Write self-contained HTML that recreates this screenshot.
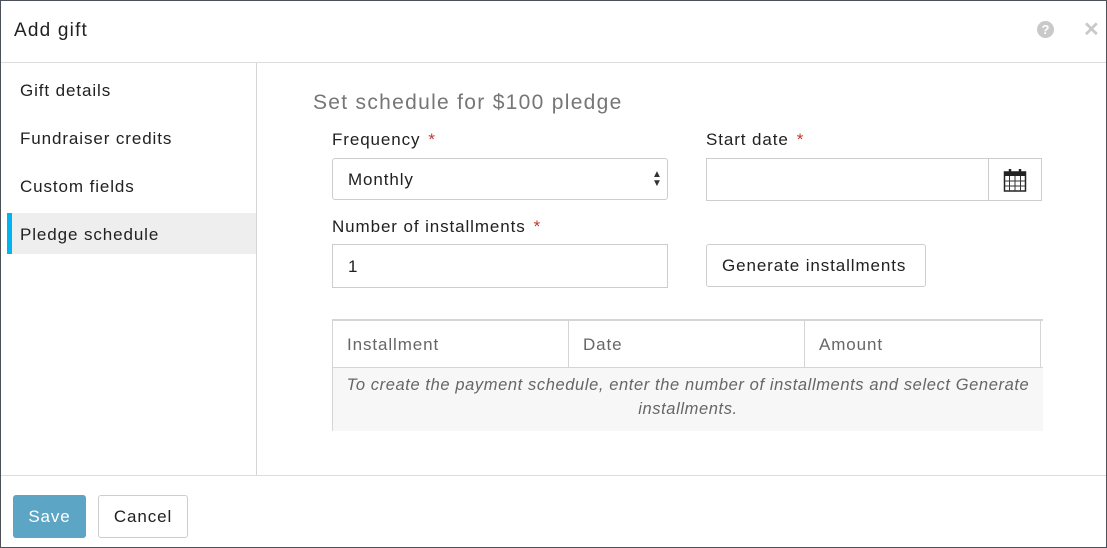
<!DOCTYPE html>
<html><head><style>
*{box-sizing:border-box;margin:0;padding:0}
body{width:1107px;height:548px;font-family:"Liberation Sans",sans-serif;color:#212121;background:#fff;position:relative;overflow:hidden}
.frame{position:absolute;left:0;top:0;width:1107px;height:548px;border:1px solid #4b5157}
.a{position:absolute}
.t{font-size:17px;letter-spacing:0.9px}
.req{color:#c0392b;margin-left:8px}
.box{border:1px solid #cdcdcd;background:#fff}
</style></head><body>
<div class="frame"></div>
<div class="a" style="left:14px;top:20px;font-size:19px;letter-spacing:1.2px;color:#212121">Add gift</div>
<div class="a" style="left:1037px;top:21px;width:17px;height:17px;border-radius:50%;background:#c9c9c9;color:#fff;font-size:13px;font-weight:bold;text-align:center;line-height:17px">?</div>
<div class="a" style="left:1083px;top:17px;color:#c9c9c9;font-size:20px;font-weight:bold">✕</div>
<div class="a" style="left:1px;top:62px;width:1105px;height:1px;background:#ddd"></div>
<div class="a" style="left:256px;top:63px;width:1px;height:412px;background:#d5d5d5"></div>
<div class="a" style="left:1px;top:475px;width:1105px;height:1px;background:#ddd"></div>
<div class="a t" style="left:20px;top:81px">Gift details</div>
<div class="a t" style="left:20px;top:129px">Fundraiser credits</div>
<div class="a t" style="left:20px;top:177px">Custom fields</div>
<div class="a" style="left:7px;top:213px;width:249px;height:41px;background:#eee;border-left:5px solid #00b4f1"></div>
<div class="a t" style="left:20px;top:225px">Pledge schedule</div>
<div class="a" style="left:313px;top:91px;font-size:21px;letter-spacing:1.3px;color:#767676">Set schedule for $100 pledge</div>
<div class="a t" style="left:332px;top:130px">Frequency<span class="req">*</span></div>
<div class="a t" style="left:706px;top:130px">Start date<span class="req">*</span></div>
<div class="a box" style="left:332px;top:158px;width:336px;height:42px;border-radius:3px"></div>
<div class="a t" style="left:348px;top:170px">Monthly</div>
<div class="a" style="left:652px;top:170px;font-size:10px;line-height:9px;color:#333">▲<br>▼</div>
<div class="a box" style="left:706px;top:158px;width:336px;height:43px"></div>
<div class="a" style="left:988px;top:158px;width:1px;height:43px;background:#cdcdcd"></div>
<svg class="a" style="left:1003px;top:168px" width="24" height="24" viewBox="0 0 24 24"><rect x="1.5" y="4" width="21" height="19" fill="#fff" stroke="#222" stroke-width="1.5"/><rect x="1.5" y="4" width="21" height="4" fill="#222"/><path d="M7 1v5M17 1v5" stroke="#222" stroke-width="2.5"/><path d="M6.5 8v15M12 8v15M17.5 8v15M1.5 13h21M1.5 18h21" stroke="#333" stroke-width="1"/></svg>
<div class="a t" style="left:332px;top:217px">Number of installments<span class="req">*</span></div>
<div class="a box" style="left:332px;top:244px;width:336px;height:44px"></div>
<div class="a t" style="left:348px;top:257px">1</div>
<div class="a box" style="left:706px;top:244px;width:220px;height:43px;border-radius:3px"></div>
<div class="a t" style="left:722px;top:256px">Generate installments</div>
<div class="a" style="left:332px;top:319px;width:711px;height:112px;border-top:2px solid #d5d5d5;border-left:1px solid #d5d5d5"></div>
<div class="a" style="left:333px;top:367px;width:710px;height:64px;background:#f7f7f7;border-top:1px solid #d5d5d5"></div>
<div class="a" style="left:568px;top:321px;width:1px;height:46px;background:#d5d5d5"></div>
<div class="a" style="left:804px;top:321px;width:1px;height:46px;background:#d5d5d5"></div>
<div class="a" style="left:1040px;top:321px;width:1px;height:46px;background:#d5d5d5"></div>
<div class="a t" style="left:347px;top:335px;color:#666">Installment</div>
<div class="a t" style="left:583px;top:335px;color:#666">Date</div>
<div class="a t" style="left:819px;top:335px;color:#666">Amount</div>
<div class="a" style="left:333px;top:373px;width:710px;text-align:center;font-style:italic;font-size:16.5px;letter-spacing:0.6px;line-height:24px;color:#666">To create the payment schedule, enter the number of installments and select Generate<br>installments.</div>
<div class="a" style="left:13px;top:495px;width:73px;height:43px;background:#5ca5c4;border-radius:3px;color:#fff;font-size:17px;letter-spacing:0.9px;text-align:center;line-height:43px">Save</div>
<div class="a box" style="left:98px;top:495px;width:90px;height:43px;border-radius:3px;font-size:17px;letter-spacing:0.9px;text-align:center;line-height:41px">Cancel</div>
</body></html>
